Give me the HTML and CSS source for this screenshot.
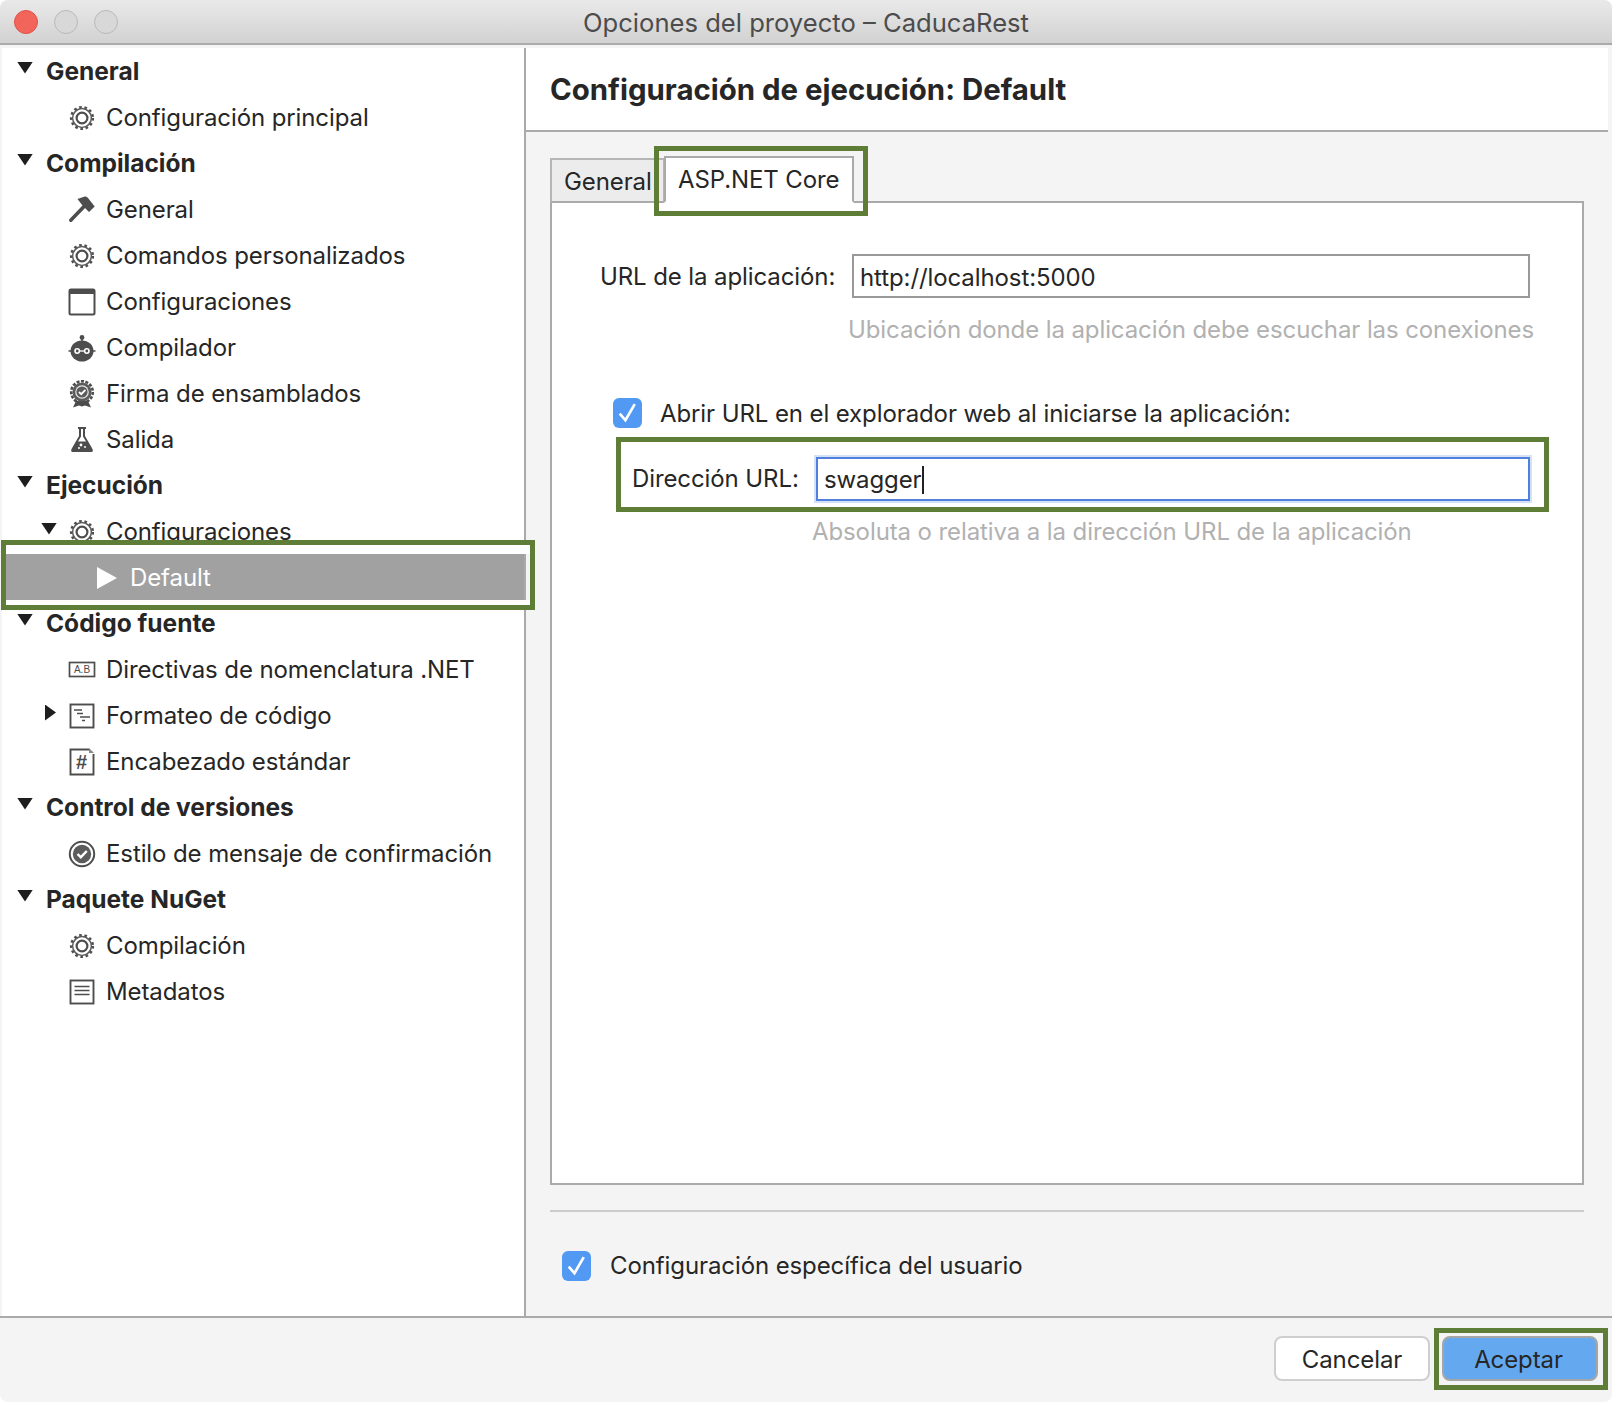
FILE: index.html
```html
<!DOCTYPE html>
<html lang="es">
<head>
    <meta charset="UTF-8">
    <title>Opciones del proyecto – CaducaRest</title>
    <link rel="stylesheet" href="styles.css">
</head>
<body>
    <!-- Iconos reutilizados -->
    <svg class="oculto" width="0" height="0">
        <symbol id="i-engrane" viewBox="0 0 28 28">
            <circle cx="14" cy="14" r="10.8" fill="none" stroke="#4d4d4d" stroke-width="2.6" stroke-dasharray="2.6 2.7"/>
            <circle cx="14" cy="14" r="9.4" fill="none" stroke="#5c5c5c" stroke-width="1.5"/>
            <circle cx="14" cy="14" r="5.4" fill="none" stroke="#4d4d4d" stroke-width="2.2"/>
        </symbol>
    </svg>

    <div class="ventana">
        <header class="titulo">
            <div class="semaforo">
                <span class="luz luz-roja"></span>
                <span class="luz"></span>
                <span class="luz"></span>
            </div>
            <span class="titulo-texto">Opciones del proyecto – CaducaRest</span>
        </header>

        <div class="cuerpo">
            <!-- Arbol de secciones -->
            <nav class="lista">
                <div class="fila grupo"><span class="flecha"></span>General</div>
                <div class="fila item"><span class="hueco"></span><svg class="icono"><use href="#i-engrane"/></svg>Configuración principal</div>

                <div class="fila grupo"><span class="flecha"></span>Compilación</div>
                <div class="fila item"><span class="hueco"></span>
                    <svg class="icono" viewBox="0 0 28 28"><path d="M2.8 24.2 L16 10.5" stroke="#4d4d4d" stroke-width="3.6" stroke-linecap="round" fill="none"/><path d="M9.5 3 L16 .7 Q18 0 20 2 L26.7 10.5 L21 16 L17.5 12.5 L14.5 9.5 Z" fill="#4d4d4d"/></svg>General</div>
                <div class="fila item"><span class="hueco"></span><svg class="icono"><use href="#i-engrane"/></svg>Comandos personalizados</div>
                <div class="fila item"><span class="hueco"></span>
                    <svg class="icono" viewBox="0 0 28 28"><rect x="1.5" y="1.5" width="25" height="25" rx="1.5" fill="#fff" stroke="#4d4d4d" stroke-width="2"/><rect x="1.5" y="1.5" width="25" height="4.5" fill="#4d4d4d"/></svg>Configuraciones</div>
                <div class="fila item"><span class="hueco"></span>
                    <svg class="icono" viewBox="0 0 28 28"><circle cx="14" cy="3.5" r="2.4" fill="#4d4d4d"/><path d="M14 4 V9" stroke="#4d4d4d" stroke-width="1.6"/><ellipse cx="14" cy="17" rx="11.5" ry="10.5" fill="#4d4d4d"/><path d="M.5 17 H3 M25 17 H27.5" stroke="#4d4d4d" stroke-width="1.4"/><circle cx="9.2" cy="17" r="3" fill="#fff"/><circle cx="18.8" cy="17" r="3" fill="#fff"/><circle cx="9.2" cy="17" r="1.4" fill="#4d4d4d"/><circle cx="18.8" cy="17" r="1.4" fill="#4d4d4d"/><path d="M12 17 H16" stroke="#fff" stroke-width="1.3"/></svg>Compilador</div>
                <div class="fila item"><span class="hueco"></span>
                    <svg class="icono" viewBox="0 0 28 28"><path d="M8 21 L5 27.5 L11 25.5 L14 26.5 L17 25.5 L23 27.5 L20 21 Z" fill="#4d4d4d"/><circle cx="14" cy="12" r="10.8" fill="none" stroke="#4d4d4d" stroke-width="2.6" stroke-dasharray="3 1.5"/><circle cx="14" cy="12" r="9.6" fill="#5c5c5c"/><circle cx="14" cy="12" r="6.8" fill="#fff" fill-opacity=".85"/><circle cx="14" cy="12" r="5.6" fill="#5c5c5c"/><path d="M11 12 L13.2 14.2 L17.4 9.8" stroke="#fff" stroke-width="1.8" fill="none"/></svg>Firma de ensamblados</div>
                <div class="fila item"><span class="hueco"></span>
                    <svg class="icono" viewBox="0 0 28 28"><path d="M10 1 H18 V3 H17 V10 L24.5 23 Q25.5 26 23.5 26 H4.5 Q2.5 26 3.5 23 L11 10 V3 H10 Z" fill="#4d4d4d"/><path d="M13 3 H15 V10.5 L18 15.5 H10 L13 10.5 Z" fill="#fff"/><circle cx="13" cy="19" r="1.4" fill="#fff"/><circle cx="17" cy="21" r="1" fill="#fff"/><circle cx="11" cy="22" r="1" fill="#fff"/></svg>Salida</div>

                <div class="fila grupo"><span class="flecha"></span>Ejecución</div>
                <div class="fila item"><span class="hueco"><span class="flecha flecha-item"></span></span><svg class="icono"><use href="#i-engrane"/></svg>Configuraciones</div>
                <div class="fila seleccion">
                    <svg class="icono-play" viewBox="0 0 20 22"><path d="M0 0 L20 11 L0 22 Z" fill="#fff"/></svg>Default
                    <span class="marco marco-lista"></span>
                </div>

                <div class="fila grupo"><span class="flecha"></span>Código fuente</div>
                <div class="fila item"><span class="hueco"></span>
                    <svg class="icono" viewBox="0 0 28 28"><rect x="1.5" y="6.5" width="25" height="14" fill="#fff" stroke="#4d4d4d" stroke-width="1.7"/><text x="14" y="17" class="svg-letras" text-anchor="middle">A.B</text></svg>Directivas de nomenclatura .NET</div>
                <div class="fila item"><span class="hueco"><span class="flecha flecha-cerrada"></span></span>
                    <svg class="icono" viewBox="0 0 28 28"><rect x="2.5" y="2.5" width="23" height="23" fill="#fff" stroke="#4d4d4d" stroke-width="1.9"/><path d="M6 8 H14 M9 11.5 H15 M12 15 H22 M14 18.5 H17" stroke="#4d4d4d" stroke-width="1.6"/></svg>Formateo de código</div>
                <div class="fila item"><span class="hueco"></span>
                    <svg class="icono" viewBox="0 0 28 28"><path d="M21 1.5 H2.5 V26.5 H25.5 V6" fill="#fff" stroke="#4d4d4d" stroke-width="1.9"/><path d="M21 0 L26 5 H21 Z" fill="#888"/><text x="13.5" y="20.5" class="svg-gato" text-anchor="middle">#</text></svg>Encabezado estándar</div>

                <div class="fila grupo"><span class="flecha"></span>Control de versiones</div>
                <div class="fila item"><span class="hueco"></span>
                    <svg class="icono" viewBox="0 0 28 28"><circle cx="14" cy="14" r="12.2" fill="#fff" stroke="#4d4d4d" stroke-width="2"/><circle cx="14" cy="14" r="9.2" fill="#5c5c5c"/><path d="M9.5 14 L12.8 17.2 L18.8 11" stroke="#fff" stroke-width="2.4" fill="none"/></svg>Estilo de mensaje de confirmación</div>

                <div class="fila grupo"><span class="flecha"></span>Paquete NuGet</div>
                <div class="fila item"><span class="hueco"></span><svg class="icono"><use href="#i-engrane"/></svg>Compilación</div>
                <div class="fila item"><span class="hueco"></span>
                    <svg class="icono" viewBox="0 0 28 28"><rect x="2.5" y="2.5" width="23" height="23" fill="#fff" stroke="#4d4d4d" stroke-width="1.9"/><path d="M6.5 8.5 H21.5 M6.5 12.5 H21.5 M6.5 16.5 H21.5" stroke="#4d4d4d" stroke-width="1.6"/></svg>Metadatos</div>
            </nav>

            <!-- Panel de configuracion -->
            <main class="detalle">
                <h1 class="detalle-titulo">Configuración de ejecución: Default</h1>

                <div class="zona">
                    <div class="pestanas">
                        <div class="pestana">General</div>
                        <div class="pestana pestana-activa">ASP.NET Core<span class="marco marco-pestana"></span></div>
                    </div>

                    <section class="hoja">
                        <div class="fila-url">
                            <label class="etiqueta" for="url">URL de la aplicación:</label>
                            <input class="campo" id="url" type="text" value="http://localhost:5000">
                        </div>
                        <p class="ayuda ayuda-url">Ubicación donde la aplicación debe escuchar las conexiones</p>

                        <div class="check-abrir">
                            <span class="check"><svg viewBox="0 0 28 28"><path d="M6.5 14.5 L12 21 L21 5.5" stroke="#fff" stroke-width="2.6" fill="none"/></svg></span>
                            Abrir URL en el explorador web al iniciarse la aplicación:
                        </div>

                        <div class="caja-direccion">
                            <span class="etiqueta-dir">Dirección URL:</span>
                            <div class="campo campo-foco">swagger<span class="cursor"></span></div>
                        </div>
                        <p class="ayuda ayuda-dir">Absoluta o relativa a la dirección URL de la aplicación</p>
                    </section>

                    <div class="usuario">
                        <span class="check"><svg viewBox="0 0 28 28"><path d="M6.5 14.5 L12 21 L21 5.5" stroke="#fff" stroke-width="2.6" fill="none"/></svg></span>
                        Configuración específica del usuario
                    </div>
                </div>
            </main>
        </div>

        <footer class="pie">
            <button class="boton" type="button">Cancelar</button>
            <button class="boton boton-azul" type="button">Aceptar<span class="marco marco-boton"></span></button>
        </footer>
    </div>
</body>
</html>
```

FILE: styles.css
```css
* {
    box-sizing: border-box;
}
html, body {
    margin: 0;
    background-color: #fff;
}
body {
    font-family: 'Inter', 'Liberation Sans', sans-serif;
    font-size: 24px;
    letter-spacing: -0.1px;
    color: #262626;
}
.oculto {
    position: absolute;
}
.ventana {
    width: 1612px;
    height: 1402px;
    display: flex;
    flex-direction: column;
    background-color: #f4f4f4;
    border-radius: 8px;
    overflow: hidden;
}

/* Barra de titulo */
.titulo {
    height: 45px;
    flex: none;
    display: flex;
    align-items: center;
    justify-content: center;
    position: relative;
    padding-top: 2px;
    background-image: linear-gradient(#e9e9e9, #d2d2d2);
    border-bottom: 2px solid #aaa;
}
.titulo-texto {
    color: #4c4c4c;
    font-size: 25.6px;
    letter-spacing: 0;
}
.semaforo {
    position: absolute;
    left: 14px;
    top: 10px;
    display: flex;
    gap: 16px;
}
.luz {
    width: 24px;
    height: 24px;
    border-radius: 50%;
    border: 1px solid #b9b9b9;
    background-color: #d8d8d8;
}
.luz-roja {
    background-color: #f2655b;
    border-color: #e0524a;
}

/* Columnas */
.cuerpo {
    flex: 1;
    display: flex;
    padding: 3px 4px 0 2px;
    border-bottom: 2px solid #aaa;
    min-height: 0;
}
.lista {
    width: 524px;
    flex: none;
    background-color: #fff;
    border-right: 2px solid #aaa;
}
.fila {
    height: 46px;
    padding-top: 1px;
    display: flex;
    align-items: center;
    white-space: nowrap;
}
.grupo {
    font-size: 24.5px;
    font-weight: 700;
    letter-spacing: 0;
    padding-top: 0;
    padding-bottom: 1px;
    padding-left: 15px;
}
.grupo .flecha {
    margin-right: 13px;
}
.item {
    padding-left: 40px;
}
.hueco {
    width: 26px;
    flex: none;
    display: flex;
}
.flecha {
    width: 16px;
    height: 12px;
    flex: none;
    margin-top: -6px;
    background-color: #1e1e1e;
    clip-path: polygon(0 0, 100% 0, 50% 100%);
}
.flecha-item {
    margin-left: -1px;
}
.flecha-cerrada {
    width: 11px;
    height: 16px;
    margin-left: 3px;
    clip-path: polygon(0 0, 100% 50%, 0 100%);
}
.icono {
    width: 28px;
    height: 28px;
    flex: none;
    margin-right: 10px;
}
.svg-letras {
    font-family: 'Liberation Sans', sans-serif;
    font-size: 10px;
    letter-spacing: 0;
    fill: #4d4d4d;
}
.svg-gato {
    font-family: 'Liberation Sans', sans-serif;
    font-size: 20px;
    font-weight: 700;
    fill: #4d4d4d;
}
.seleccion {
    position: relative;
    padding-left: 91px;
    background-color: #a1a1a1;
    color: #fff;
    margin-left: 4px;
}
.icono-play {
    width: 20px;
    height: 22px;
    flex: none;
    margin-right: 13px;
}

/* Marcos verdes de la captura */
.marco {
    position: absolute;
    border: 5px solid #5e7d37;
    pointer-events: none;
}
.marco-lista {
    top: -14px;
    bottom: -10px;
    left: -5px;
    right: -11px;
    box-shadow: inset 0 9px 0 #fff, inset 0 -5px 0 #fff;
}
.marco-pestana {
    top: -12px;
    bottom: -15px;
    left: -12px;
    right: -16px;
}
.marco-boton {
    top: -10px;
    bottom: -11px;
    left: -10px;
    right: -12px;
}

/* Detalle */
.detalle {
    flex: 1;
    display: flex;
    flex-direction: column;
    min-width: 0;
}
.detalle-titulo {
    margin: 0;
    height: 84px;
    flex: none;
    display: flex;
    align-items: center;
    padding-left: 24px;
    font-size: 29.4px;
    font-weight: 700;
    letter-spacing: 0;
    background-color: #fff;
    border-bottom: 2px solid #aaa;
}
.zona {
    flex: 1;
    display: flex;
    flex-direction: column;
    padding: 0 24px 0 24px;
    min-height: 0;
}
.pestanas {
    display: flex;
    height: 45px;
    margin-top: 24px;
    flex: none;
    align-items: flex-end;
    position: relative;
    z-index: 1;
}
.pestana {
    width: 115px;
    height: 45px;
    margin-bottom: -2px;
    padding-left: 12px;
    padding-top: 2px;
    display: flex;
    align-items: center;
    white-space: nowrap;
    background-color: #ececec;
    border: 2px solid #b5b5b5;
    border-bottom-color: #aaa;
    overflow: hidden;
}
.pestana-activa {
    width: 190px;
    height: 47px;
    margin-left: -1px;
    padding-left: 12px;
    padding-top: 0;
    position: relative;
    overflow: visible;
    background-color: #fff;
    border-color: #aaa;
    border-bottom-color: #fff;
}
.hoja {
    flex: 1;
    background-color: #fff;
    border: 2px solid #aaa;
    min-height: 0;
}
.fila-url {
    display: flex;
    align-items: center;
    margin: 51px 52px 0 48px;
}
.etiqueta {
    width: 252px;
    flex: none;
}
.campo {
    flex: 1;
    min-width: 0;
    height: 44px;
    padding: 2px 6px 0;
    font: inherit;
    letter-spacing: inherit;
    color: inherit;
    background-color: #fff;
    border: 2px solid #999;
    display: flex;
    align-items: center;
    outline: none;
}
.campo-foco {
    border-color: #4f80dd;
    box-shadow: 0 0 0 2px #d5e2f6;
}
.cursor {
    width: 2px;
    height: 28px;
    background-color: #222;
}
.ayuda {
    margin: 0;
    height: 30px;
    line-height: 30px;
    color: #b1b1b1;
    white-space: nowrap;
}
.ayuda-url {
    margin: 17px 0 0 296px;
}
.ayuda-dir {
    margin: 5px 0 0 260px;
}
.check {
    width: 29px;
    height: 30px;
    flex: none;
    border-radius: 6px;
    background-color: #5299f3;
    display: flex;
}
.check-abrir {
    display: flex;
    align-items: center;
    gap: 18px;
    margin: 53px 0 0 61px;
    height: 30px;
}
.caja-direccion {
    display: flex;
    align-items: center;
    width: 933px;
    height: 75px;
    margin: 9px 0 0 64px;
    padding: 8px 14px 0 11px;
    background-color: #fff;
    border: 5px solid #5e7d37;
}
.etiqueta-dir {
    width: 184px;
    flex: none;
}
.usuario {
    flex: none;
    height: 106px;
    margin-top: 25px;
    padding: 3px 0 0 12px;
    display: flex;
    align-items: center;
    gap: 19px;
    border-top: 2px solid #ccc;
}

/* Pie con botones */
.pie {
    height: 84px;
    flex: none;
    display: flex;
    justify-content: flex-end;
    gap: 12px;
    padding: 18px 14px 0 0;
}
.boton {
    width: 156px;
    height: 45px;
    padding: 1px 0 0;
    font: inherit;
    letter-spacing: inherit;
    color: inherit;
    position: relative;
    background-color: #fff;
    border: 2px solid #cfcfcf;
    border-radius: 8px;
}
.boton-azul {
    padding-right: 3px;
    background-color: #64a9ef;
    border-color: #a6a6a6;
}
```
